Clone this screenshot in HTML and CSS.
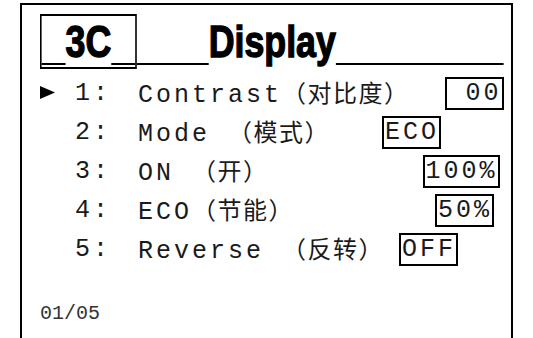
FILE: index.html
```
<!DOCTYPE html>
<html lang="zh-CN">
<head>
    <meta charset="UTF-8">
    <meta name="viewport" content="width=device-width, initial-scale=1.0">
    <title>3C Display</title>
    <link rel="stylesheet" href="styles.css">
</head>
<body>
    <div class="screen">
        <h1 class="title">
            <span class="title-text"><span class="tag"><span class="rule">_</span>3C<span class="rule">_</span></span><span class="rule">___</span>Display<span class="rule">_______</span></span>
        </h1>
        <ul class="menu">
            <li class="item">
                <span class="cursor">
                    <svg viewBox="0 0 15 13" width="15" height="13"><polygon points="0,0 15,6.5 0,13" fill="#000"></polygon></svg>
                </span>
                <span class="num">1:</span>
                <span class="label">Contrast<span class="zh">（对比度）</span></span>
                <span class="value value-contrast"> 00</span>
            </li>
            <li class="item">
                <span class="cursor"></span>
                <span class="num">2:</span>
                <span class="label">Mode <span class="zh">（模式）</span></span>
                <span class="value value-mode">ECO</span>
            </li>
            <li class="item">
                <span class="cursor"></span>
                <span class="num">3:</span>
                <span class="label">ON <span class="zh">（开）</span></span>
                <span class="value value-on">100%</span>
            </li>
            <li class="item">
                <span class="cursor"></span>
                <span class="num">4:</span>
                <span class="label">ECO<span class="zh">（节能）</span></span>
                <span class="value value-eco">50%</span>
            </li>
            <li class="item">
                <span class="cursor"></span>
                <span class="num">5:</span>
                <span class="label">Reverse <span class="zh">（反转）</span></span>
                <span class="value value-reverse">OFF</span>
            </li>
        </ul>
        <div class="page">01/05</div>
    </div>
</body>
</html>
```
FILE: styles.css
```
* {
    margin: 0;
    padding: 0;
    box-sizing: border-box;
}
html, body {
    height: 100%;
    overflow: hidden;
}
body {
    background-color: #fff;
    color: #000;
    font-family: 'Liberation Mono', 'Noto Sans CJK SC', monospace;
}
/* frame runs off the bottom of the screen, so no bottom border */
.screen {
    height: calc(100% - 3px);
    margin: 3px 20px 0;
    padding: 9px 0 0 18px;
    border: 2px solid #000;
    border-bottom: none;
}
.title {
    height: 55px;
    overflow: hidden;
    font-family: 'Liberation Sans', Arial, sans-serif;
    font-weight: bold;
    font-size: 44.7px;
    line-height: 51px;
    white-space: nowrap;
}
/* condensed heavy face: squeeze the bold sans sideways */
.title-text {
    display: inline-block;
    transform: scaleX(0.8);
    transform-origin: left top;
    -webkit-text-stroke: 1.4px #000;
}
.tag {
    display: inline-block;
    border: 2.5px solid #000;
    border-top-width: 2px;
    border-bottom-width: 2px;
}
/* underscores drawn as one continuous underline */
.rule {
    color: transparent;
    letter-spacing: 5.1px;
    -webkit-text-stroke: 0;
    text-decoration: underline #000;
    text-decoration-thickness: 2px;
    text-underline-offset: 6px;
    text-decoration-skip-ink: none;
}
.menu {
    list-style: none;
    margin-top: 5px;
}
.item {
    display: flex;
    align-items: center;
    height: 39px;
    font-size: 25px;
    letter-spacing: 3px;
    line-height: 29px;
    white-space: pre;
    color: #1a1a1a;
}
.cursor {
    width: 35px;
    display: flex;
    align-items: center;
    padding-bottom: 3px;
}
.num {
    width: 63px;
}
.zh {
    font-family: 'Noto Sans CJK SC', sans-serif;
    font-size: 24px;
    letter-spacing: 1.5px;
}
.value {
    border: 2px solid #000;
    padding-left: 1px;
}
.value-contrast {
    margin-left: 35px;
}
.value-mode {
    margin-left: 52px;
}
.value-on {
    margin-left: 154px;
}
.value-eco {
    margin-left: 141px;
}
.value-reverse {
    margin-left: 15px;
}
.page {
    margin-top: 35px;
    font-size: 20px;
    line-height: 20px;
    color: #333;
}
```
